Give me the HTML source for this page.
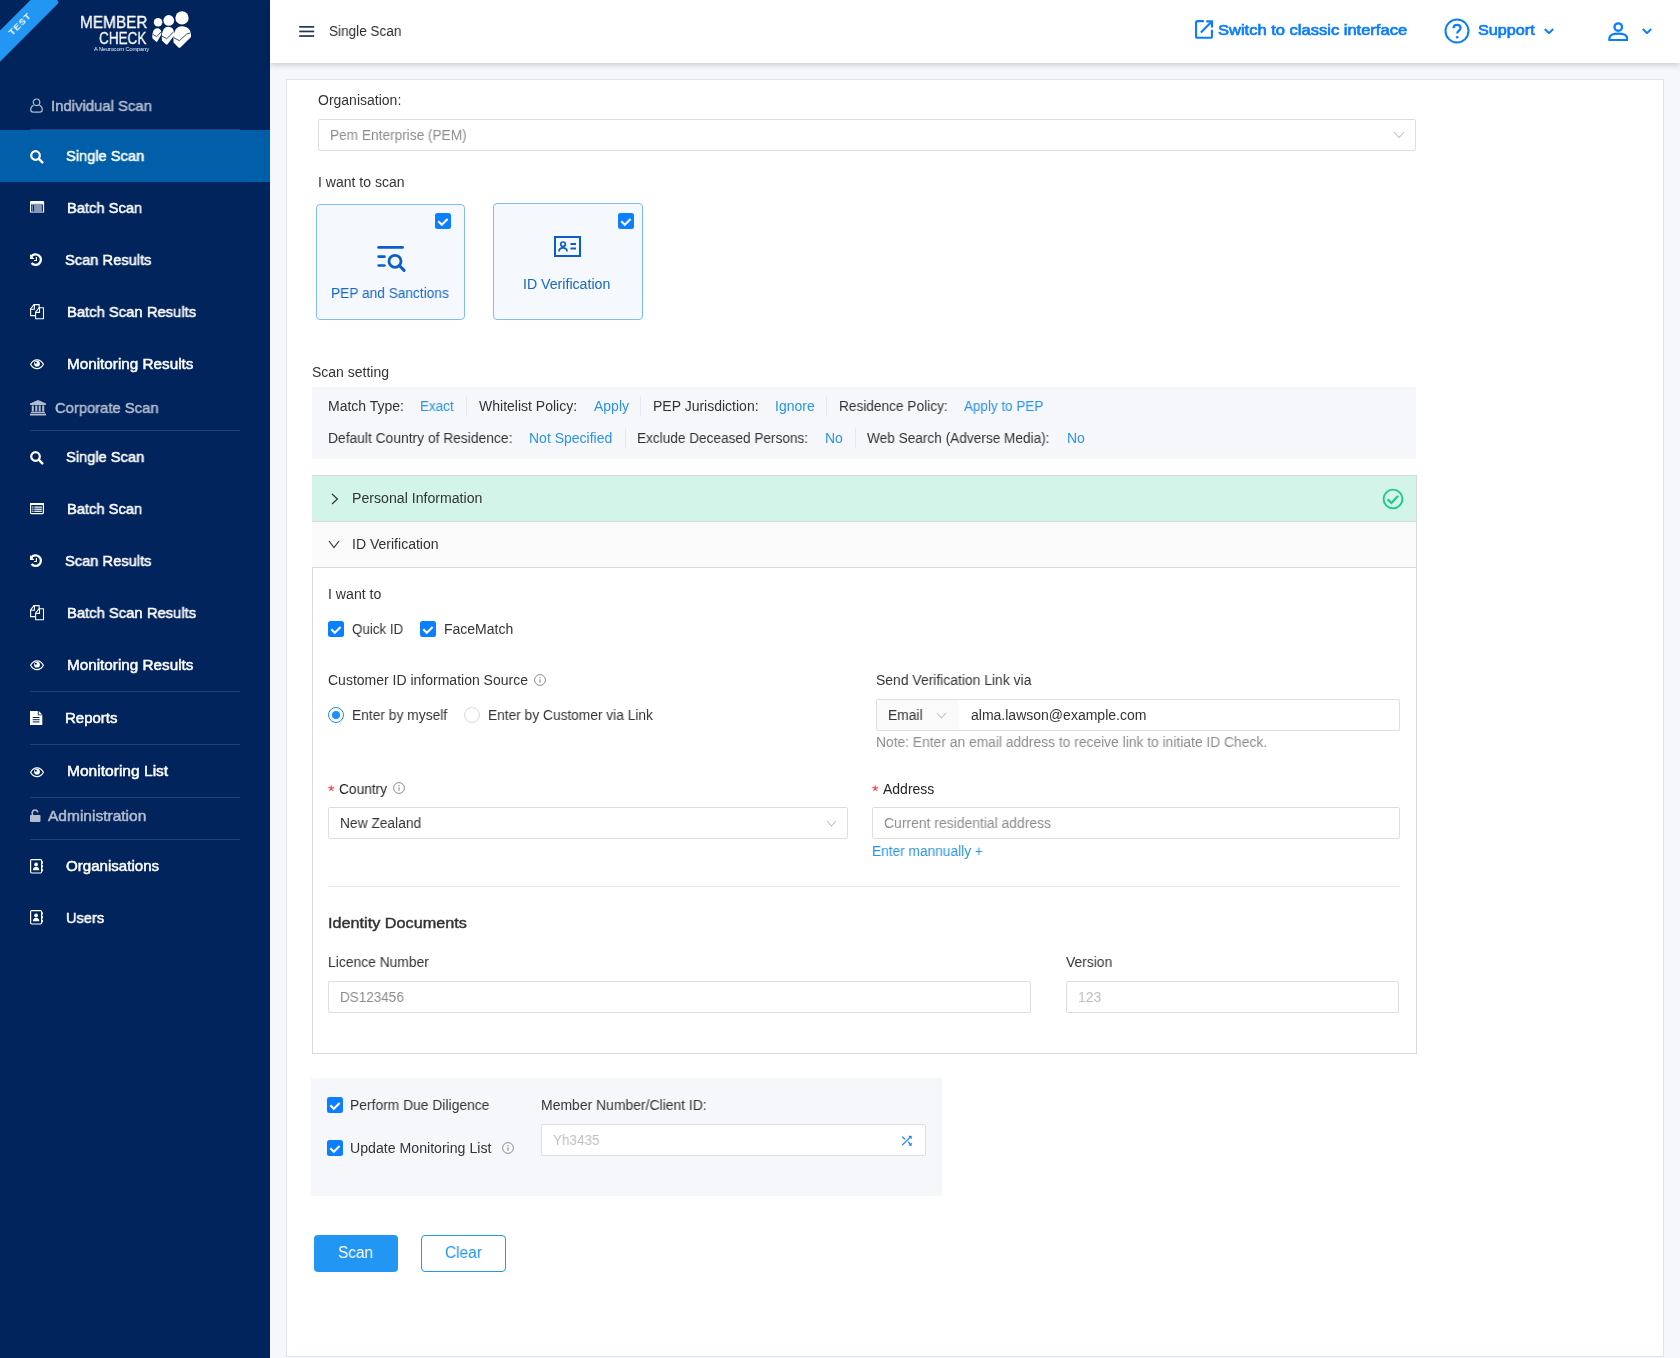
<!DOCTYPE html>
<html>
<head>
<meta charset="utf-8">
<title>Single Scan</title>
<style>
*{box-sizing:border-box;margin:0;padding:0}
html,body{width:1680px;height:1358px;overflow:hidden;background:#f5f7fb;font-family:"Liberation Sans",sans-serif;font-size:14px;color:#333}
.abs{position:absolute}
.t,.it,.hd,#lg1,#lg2,#lg3,#testtxt{will-change:transform}
.t{position:absolute;white-space:nowrap;line-height:20px;height:20px;font-size:14px;color:#333;transform-origin:0 50%}
.blue{color:#2a93e8}
.gray{color:#8c8c8c}
/* sidebar */
#side{position:absolute;left:0;top:0;width:270px;height:1358px;background:#00245b;overflow:hidden}
#side .it{position:absolute;white-space:nowrap;color:#fff;font-weight:normal;-webkit-text-stroke:.5px #fff;font-size:15px;line-height:20px;height:20px;transform-origin:0 50%}
#side .hd{position:absolute;white-space:nowrap;color:#b3bccf;font-weight:normal;-webkit-text-stroke:.5px #b3bccf;font-size:15px;line-height:20px;height:20px;transform-origin:0 50%}
#side .dv{position:absolute;left:30px;width:210px;height:1px;background:#22427a}
#side svg{position:absolute;overflow:visible}
/* header */
#hdr{position:absolute;left:270px;top:0;width:1410px;height:63px;background:#fff;box-shadow:0 2px 6px rgba(0,0,0,.18)}
#card{position:absolute;left:286px;top:79px;width:1378px;height:1277.500px;background:#fff;border:1px solid #dfe3ec}
.inp{position:absolute;background:#fff;border:1px solid #dedede;border-radius:2px}
.cb{position:absolute;width:16px;height:16px;background:#0c7fff;border-radius:2.500px}
.cb svg{position:absolute;left:0;top:0}
</style>
</head>
<body>
<div id="side">
<!-- TEST ribbon -->
<div class="abs" style="left:-34.500px;top:19px;width:100px;height:21.500px;background:#2196f3;transform:rotate(-45deg);transform-origin:50% 50%;border-radius:2.500px"></div>
<div class="abs" id="testtxt" style="left:0px;top:17px;width:40px;height:14px;line-height:14px;color:#fff;font-weight:bold;font-size:9.500px;letter-spacing:.9px;transform:rotate(-45deg);text-align:center;white-space:nowrap">TEST</div>
<!-- logo -->
<div id="logo" class="abs" style="left:79px;top:12px;width:115px;height:42px">
<div class="abs" id="lg1" style="left:.700px;top:2.200px;color:#fff;-webkit-text-stroke:.3px #fff;font-size:17px;line-height:18px;white-space:nowrap;transform-origin:0 50%;transform:scale(.905,1)">MEMBER</div>
<div class="abs" id="lg2" style="left:20.400px;top:16.700px;color:#fff;-webkit-text-stroke:.3px #fff;font-size:16.500px;line-height:18px;white-space:nowrap;transform-origin:0 50%;transform:scale(.82,1)">CHECK</div>
<div class="abs" id="lg3" style="left:15px;top:32.500px;color:#fff;font-size:6.200px;line-height:8px;white-space:nowrap;transform-origin:0 50%;transform:scale(.88,1)">A Neurocom Company</div>
<svg style="left:66px;top:-7px" width="55" height="50" viewBox="0 0 55 50">
<g fill="#fff">
<circle cx="13.070" cy="17.300" r="4.250"/><circle cx="23.750" cy="15.460" r="5.350"/><circle cx="37" cy="12.900" r="6.650"/>
<path d="M7.300 32.500C7.300 27 8.800 23.200 12 23.200c2.800 0 4.300 1.800 4.300 4.300v2L12.300 36.600q-.7.700-1.400 0L7.500 33.500z"/>
<path d="M16.800 32.500C16.800 26 19 21.700 23 21.700c4 0 6.100 2.800 6.100 6.300v2.500L22.600 39.200q-.9.800-1.800 0L17 35.500z"/>
<path d="M28.400 34C28.400 26 31.500 21.300 37 21.300c5.500 0 9 3.700 9 8.700v2L35.400 42.400q-1 .9-2 0L28.600 37.500z"/>
</g>
<g fill="none" stroke="#1b3a73" stroke-width=".9">
<path d="M8 29.300l3.600 2.400 4.600-4.900"/><path d="M16.900 31.100l4.800 2.600 7-6.900"/><path d="M28.600 32.700l5.800 3 7.200-6.600 4-1.300"/>
</g>
</svg>
</div>

<!-- Individual Scan header -->
<svg style="left:30px;top:98px" width="13" height="15" viewBox="0 0 13 15" fill="none" stroke="#b3bccf" stroke-width="1.200"><circle cx="6.500" cy="4.300" r="3.300"/><path d="M3.600 7.200C1.800 8 .7 9.500.7 11.500c0 1.500 1 2.600 2.500 2.600h6.600c1.500 0 2.500-1.100 2.500-2.600 0-2-1.100-3.500-2.900-4.300"/></svg>
<div class="hd" style="left:51px;top:96px;transform:scaleX(0.9928)">Individual Scan</div>
<div class="dv" style="top:129px"></div>
<div class="abs" style="left:0;top:130px;width:270px;height:52px;background:#005fa8"></div>

<div class="it" style="left:66px;top:146px;transform:scaleX(0.9780)">Single Scan</div>
<div class="it" style="left:67px;top:198px;transform:scaleX(0.9802)">Batch Scan</div>
<div class="it" style="left:65px;top:250px;transform:scaleX(0.9788)">Scan Results</div>
<div class="it" style="left:67px;top:302px;transform:scaleX(0.9862)">Batch Scan Results</div>
<div class="it" style="left:67px;top:354px;transform:scaleX(1.0184)">Monitoring Results</div>

<div class="hd" style="left:55px;top:398px;transform:scaleX(0.9861)">Corporate Scan</div>
<div class="dv" style="top:430px"></div>
<div class="it" style="left:66px;top:447px;transform:scaleX(0.9780)">Single Scan</div>
<div class="it" style="left:67px;top:499px;transform:scaleX(0.9802)">Batch Scan</div>
<div class="it" style="left:65px;top:551px;transform:scaleX(0.9788)">Scan Results</div>
<div class="it" style="left:67px;top:603px;transform:scaleX(0.9862)">Batch Scan Results</div>
<div class="it" style="left:67px;top:655px;transform:scaleX(1.0184)">Monitoring Results</div>
<div class="dv" style="top:691px"></div>
<div class="it" style="left:65px;top:708px;transform:scaleX(0.9918)">Reports</div>
<div class="dv" style="top:744px"></div>
<div class="it" style="left:67px;top:761px;transform:scaleX(1.0374)">Monitoring List</div>
<div class="dv" style="top:797px"></div>
<div class="hd" style="left:48px;top:806px;transform:scaleX(1.0342)">Administration</div>
<div class="dv" style="top:838.700px"></div>
<div class="it" style="left:66px;top:856px;transform:scaleX(1.0058)">Organisations</div>
<div class="it" style="left:66px;top:908px;transform:scaleX(0.9726)">Users</div>
<svg style="left:30px;top:150px" width="13" height="13" viewBox="0 0 13 13"><g fill="none" stroke="#fff"><circle cx="5.500" cy="5.500" r="4.300" stroke-width="2.200"/><path d="M8.900 8.900l3.400 3.400" stroke-width="2.500" stroke-linecap="round"/></g></svg>
<svg style="left:30px;top:201.100px" width="14.100" height="12.100" viewBox="0 0 14.100 12.100"><rect x="0" y="0" width="14.100" height="12.100" rx="1.300" fill="#8798b6"/><path d="M0 1.300Q0 0 1.300 0H12.800Q14.100 0 14.100 1.300V11.200H13.100V2.800H1V11.200H0z" fill="#fff"/><g fill="#00245b"><rect x="1.350" y="3.800" width=".8" height="6.600" rx=".4"/><rect x="3.100" y="3.800" width="1" height="6.600" rx=".5"/><rect x="11.900" y="3.800" width="1" height="6.600" rx=".5"/></g></svg>
<svg style="left:30px;top:253px" width="12.200" height="13.200" viewBox="0 0 12.200 13.200"><g fill="none" stroke="#fff"><path d="M1.260 3.560A5.300 5.300 0 1 1 1.540 10" stroke-width="2.300"/><path d="M0 1v4.900h4.300z" fill="#fff" stroke="none"/><path d="M6.400 4v3.500H4.100" stroke-width="1.200"/></g></svg>
<svg style="left:30px;top:304px" width="14" height="15.400" viewBox="0 0 14 15.400"><g fill="none" stroke="#fff" stroke-width="1.100" stroke-linejoin="round"><path d="M5.200 11.600H.6V4.800L3.900.6H9.200V4"/><path d="M4.400.6V5.200H.6"/><path d="M9.200 3.700H13.500V14.800H5.600V8z"/><path d="M9.500 3.700V8.400H5.600"/></g></svg>
<svg style="left:30px;top:358.800px" width="14" height="10.400" viewBox="0 0 14 10.400"><g><path d="M.6 5.200C2.200 2.200 4.500.8 7 .8s4.800 1.400 6.400 4.400C11.800 8.200 9.500 9.600 7 9.600S2.200 8.200.6 5.200z" fill="none" stroke="#fff" stroke-width="1.200"/><circle cx="7" cy="4.700" r="2.900" fill="#fff"/><circle cx="5.900" cy="3.700" r="1" fill="#00245b"/></g></svg>
<!-- bank -->
<svg style="left:30px;top:399.500px" width="16" height="15.500" viewBox="0 0 16 15.500" fill="#b3bccf"><path d="M8 0l8 3.600v1.300H0V3.600z"/><rect x="1.800" y="5.500" width="2" height="6"/><rect x="5.300" y="5.500" width="2" height="6"/><rect x="8.700" y="5.500" width="2" height="6"/><rect x="12.200" y="5.500" width="2" height="6"/><rect x="1" y="11.800" width="14" height="1.300"/><rect x="0" y="13.700" width="16" height="1.800"/></svg>
<svg style="left:30px;top:451.400px" width="13" height="13" viewBox="0 0 13 13"><g fill="none" stroke="#fff"><circle cx="5.500" cy="5.500" r="4.300" stroke-width="2.200"/><path d="M8.900 8.900l3.400 3.400" stroke-width="2.500" stroke-linecap="round"/></g></svg>
<svg style="left:30px;top:503px" width="14" height="11.200" viewBox="0 0 14 11.200"><g><rect x=".6" y=".6" width="12.800" height="10" rx=".8" fill="none" stroke="#fff" stroke-width="1.200"/><rect x="0" y="0" width="14" height="2" rx=".8" fill="#fff"/><g fill="#fff"><rect x="2.200" y="3.500" width="1.300" height="1.200"/><rect x="4.300" y="3.500" width="7.600" height="1.200"/><rect x="2.200" y="5.600" width="1.300" height="1.200"/><rect x="4.300" y="5.600" width="7.600" height="1.200"/><rect x="2.200" y="7.700" width="1.300" height="1.200"/><rect x="4.300" y="7.700" width="7.600" height="1.200"/></g></g></svg>
<svg style="left:30px;top:554.300px" width="12.200" height="13.200" viewBox="0 0 12.200 13.200"><g fill="none" stroke="#fff"><path d="M1.260 3.560A5.300 5.300 0 1 1 1.540 10" stroke-width="2.300"/><path d="M0 1v4.900h4.300z" fill="#fff" stroke="none"/><path d="M6.400 4v3.500H4.100" stroke-width="1.200"/></g></svg>
<svg style="left:30px;top:605.200px" width="14" height="15.400" viewBox="0 0 14 15.400"><g fill="none" stroke="#fff" stroke-width="1.100" stroke-linejoin="round"><path d="M5.200 11.600H.6V4.800L3.900.6H9.200V4"/><path d="M4.400.6V5.200H.6"/><path d="M9.200 3.700H13.500V14.800H5.600V8z"/><path d="M9.500 3.700V8.400H5.600"/></g></svg>
<svg style="left:30px;top:659.800px" width="14" height="10.400" viewBox="0 0 14 10.400"><g><path d="M.6 5.200C2.200 2.200 4.500.8 7 .8s4.800 1.400 6.400 4.400C11.800 8.200 9.500 9.600 7 9.600S2.200 8.200.6 5.200z" fill="none" stroke="#fff" stroke-width="1.200"/><circle cx="7" cy="4.700" r="2.900" fill="#fff"/><circle cx="5.900" cy="3.700" r="1" fill="#00245b"/></g></svg>
<!-- reports file -->
<svg style="left:30px;top:711px" width="12.500" height="14" viewBox="0 0 12.500 14"><path d="M0 0h7.800v4.200h4.500V14H0z" fill="#fff"/><path d="M8.700 0l3.600 3.400H8.700z" fill="#fff"/><g fill="#00245b"><rect x="2.700" y="6" width="6.800" height="1"/><rect x="2.700" y="8.200" width="6.800" height="1"/><rect x="2.700" y="10.400" width="6.800" height="1"/></g></svg>
<svg style="left:30px;top:766.800px" width="14" height="10.400" viewBox="0 0 14 10.400"><g><path d="M.6 5.200C2.200 2.200 4.500.8 7 .8s4.800 1.400 6.400 4.400C11.800 8.200 9.500 9.600 7 9.600S2.200 8.200.6 5.200z" fill="none" stroke="#fff" stroke-width="1.200"/><circle cx="7" cy="4.700" r="2.900" fill="#fff"/><circle cx="5.900" cy="3.700" r="1" fill="#00245b"/></g></svg>
<!-- unlock -->
<svg style="left:30px;top:808.800px" width="10.500" height="13" viewBox="0 0 10.500 13"><rect x="0" y="6" width="10.500" height="7" rx="1" fill="#b3bccf"/><path d="M2.300 6V3.800c0-1.700 1.200-2.800 2.700-2.800 1.400 0 2.500.9 2.700 2.300" fill="none" stroke="#b3bccf" stroke-width="1.600"/></svg>
<svg style="left:30px;top:858.500px" width="13" height="14.600" viewBox="0 0 13 14.600"><g><rect x=".6" y=".6" width="11" height="13.400" rx="1.200" fill="none" stroke="#fff" stroke-width="1.200"/><rect x="12" y="2.300" width="1" height="2.400" fill="#fff"/><rect x="12" y="6.100" width="1" height="2.400" fill="#fff"/><rect x="12" y="9.900" width="1" height="2.400" fill="#fff"/><circle cx="6.100" cy="5.400" r="1.900" fill="#fff"/><path d="M2.900 11.300c0-2.300 1.300-3.600 3.200-3.600s3.200 1.300 3.200 3.600z" fill="#fff"/></g></svg>
<svg style="left:30px;top:910.300px" width="13" height="14.600" viewBox="0 0 13 14.600"><g><rect x=".6" y=".6" width="11" height="13.400" rx="1.200" fill="none" stroke="#fff" stroke-width="1.200"/><rect x="12" y="2.300" width="1" height="2.400" fill="#fff"/><rect x="12" y="6.100" width="1" height="2.400" fill="#fff"/><rect x="12" y="9.900" width="1" height="2.400" fill="#fff"/><circle cx="6.100" cy="5.400" r="1.900" fill="#fff"/><path d="M2.900 11.300c0-2.300 1.300-3.600 3.200-3.600s3.200 1.300 3.200 3.600z" fill="#fff"/></g></svg>
</div>
<div id="hdr">
<!-- coordinates relative to #hdr (left 270) -->
<svg class="abs" style="left:29.300px;top:25.700px" width="15.400" height="11" viewBox="0 0 15 11"><g fill="#1d3557"><rect x="0" y="0" width="15" height="1.700"/><rect x="0" y="4.600" width="15" height="1.700"/><rect x="0" y="9.200" width="15" height="1.700"/></g></svg>
<div class="t" style="left:59px;top:21px;color:#2b2b2b;transform:scaleX(0.9676)">Single Scan</div>

<svg class="abs" style="left:925px;top:20px" width="18" height="19" viewBox="0 0 18 19" fill="none" stroke="#0a7dff" stroke-width="2.100"><path d="M8.900 1.150H2.600Q1.050 1.150 1.050 2.700V16.200Q1.050 17.750 2.600 17.750H15.400Q16.950 17.750 16.950 16.200V9.700"/><path d="M11.200 1.350H16.950V7.600"/><path d="M16.300 2.100L5.900 12.600"/></svg>
<div class="t" style="left:948px;top:20px;font-size:15.500px;color:#0a7dff;-webkit-text-stroke:.7px #0a7dff;transform:scaleX(1.0655)">Switch to classic interface</div>

<svg class="abs" style="left:1174px;top:18px" width="26" height="26" viewBox="0 0 26 26" fill="none" stroke="#0a7dff" stroke-width="2"><circle cx="13" cy="13" r="11.500"/><path d="M9.500 10.200c0-2 1.500-3.400 3.500-3.400s3.500 1.300 3.500 3.200c0 2.500-3.300 2.700-3.300 5.500" stroke-width="2.200"/><circle cx="13.200" cy="19.200" r="1.300" fill="#0a7dff" stroke="none"/></svg>
<div class="t" style="left:1208px;top:20px;font-size:15.500px;color:#0a7dff;-webkit-text-stroke:.7px #0a7dff;transform:scaleX(1.0443)">Support</div>
<svg class="abs" style="left:1274.300px;top:27.600px" width="10" height="6.700" viewBox="0 0 12 8" fill="none" stroke="#0a7dff" stroke-width="2.300"><path d="M1 1.200l5 5 5-5"/></svg>

<svg class="abs" style="left:1337.600px;top:20.800px" width="20.500" height="20.500" viewBox="0 0 22 22" fill="none" stroke="#0a7dff" stroke-width="2.500"><circle cx="11" cy="6.500" r="4"/><path d="M1.500 20.500v-2c0-3 4-5 9.500-5s9.500 2 9.500 5v2z" stroke-linejoin="round"/></svg>
<svg class="abs" style="left:1372px;top:27.600px" width="10" height="6.700" viewBox="0 0 12 8" fill="none" stroke="#0a7dff" stroke-width="2.300"><path d="M1 1.200l5 5 5-5"/></svg>
</div>
<div id="card"></div>
<div id="main" class="abs" style="left:0;top:0">
<div class="t" style="left:318px;top:90px;transform:scaleX(0.9942)">Organisation:</div>
<div class="inp" style="left:318px;top:119px;width:1098px;height:32px"></div>
<div class="t gray" style="left:330px;top:125.200px;transform:scaleX(0.9761)">Pem Enterprise (PEM)</div>
<svg class="abs" style="left:1393px;top:130.500px" width="12" height="8" viewBox="0 0 12 8" fill="none" stroke="#bfbfbf" stroke-width="1.100"><path d="M1 1l5 5.500 5-5.500"/></svg>

<div class="t" style="left:318px;top:172px;transform:scaleX(1.0024)">I want to scan</div>
<!-- scan type cards -->
<div class="abs" style="left:315.500px;top:204px;width:149.500px;height:116px;background:#f5f8fd;border:1px solid #7fbcf7;border-radius:4px"></div>
<div class="cb" style="left:435.300px;top:213px"><svg width="16" height="16" viewBox="0 0 16 16" fill="none" stroke="#fff" stroke-width="2"><path d="M3.300 8.300l3.500 3.500 5.800-5.800"/></svg></div>
<svg class="abs" style="left:376px;top:244.800px" width="32" height="30" viewBox="0 0 32 30" fill="none" stroke="#0a5ec8" stroke-width="2.700" stroke-linecap="round"><path d="M2.600 2.400h24"/><path d="M2.700 11.700h5.700"/><path d="M2.700 20.500h5.700"/><circle cx="19" cy="16.300" r="6" stroke-width="2.800"/><path d="M23.500 20.800l4.600 4.600" stroke-width="3"/></svg>
<div class="t" style="left:331px;top:283px;color:#1767c2;transform:scaleX(0.9785)" id="pep">PEP and Sanctions</div>

<div class="abs" style="left:493px;top:203px;width:149.500px;height:117px;background:#f5f8fd;border:1px solid #7fbcf7;border-radius:4px"></div>
<div class="cb" style="left:617.600px;top:213px"><svg width="16" height="16" viewBox="0 0 16 16" fill="none" stroke="#fff" stroke-width="2"><path d="M3.300 8.300l3.500 3.500 5.800-5.800"/></svg></div>
<svg class="abs" style="left:554px;top:236px" width="27" height="21" viewBox="0 0 27 21" fill="none" stroke="#0a5ec8" stroke-width="2"><rect x="1" y="1" width="25" height="19"/><circle cx="9" cy="8.300" r="2.300" stroke-width="1.700"/><path d="M5 15.500c0-2.500 1.800-3.700 4-3.700s4 1.200 4 3.700" stroke-width="1.700"/><path d="M16.500 8h5.500M16.500 12.500h5.500" stroke-width="1.800"/></svg>
<div class="t" style="left:523px;top:274px;color:#1767c2;transform:scaleX(1.0107)" id="idv">ID Verification</div>

<div class="t" style="left:312px;top:362px;transform:scaleX(0.9992)">Scan setting</div>
<div class="abs" style="left:312px;top:387px;width:1104px;height:72px;background:#f5f7fb"></div>
<!-- row1 -->
<div class="t" style="left:328px;top:396.400px;transform:scaleX(0.9972)">Match Type:</div>
<div class="t blue" style="left:420px;top:396.400px;transform:scaleX(0.9653)">Exact</div>
<div class="abs" style="left:466px;top:396.400px;width:1px;height:20px;background:#e4e7ee"></div>
<div class="t" style="left:479px;top:396.400px;transform:scaleX(1.0007)">Whitelist Policy:</div>
<div class="t blue" style="left:594px;top:396.400px;transform:scaleX(0.9877)">Apply</div>
<div class="abs" style="left:640px;top:396.400px;width:1px;height:20px;background:#e4e7ee"></div>
<div class="t" style="left:653px;top:396.400px;transform:scaleX(1.0002)">PEP Jurisdiction:</div>
<div class="t blue" style="left:775px;top:396.400px;transform:scaleX(0.9898)">Ignore</div>
<div class="abs" style="left:826px;top:396.400px;width:1px;height:20px;background:#e4e7ee"></div>
<div class="t" style="left:839px;top:396.400px;transform:scaleX(0.9759)">Residence Policy:</div>
<div class="t blue" style="left:964px;top:396.400px;transform:scaleX(0.9612)">Apply to PEP</div>
<!-- row2 -->
<div class="t" style="left:328px;top:428.300px;transform:scaleX(0.9873)">Default Country of Residence:</div>
<div class="t blue" style="left:529px;top:428.300px;transform:scaleX(0.9954)">Not Specified</div>
<div class="abs" style="left:625px;top:428.300px;width:1px;height:20px;background:#e4e7ee"></div>
<div class="t" style="left:637px;top:428.300px;transform:scaleX(0.9723)">Exclude Deceased Persons:</div>
<div class="t blue" style="left:825px;top:428.300px;transform:scaleX(0.9997)">No</div>
<div class="abs" style="left:855px;top:428.300px;width:1px;height:20px;background:#e4e7ee"></div>
<div class="t" style="left:867px;top:428.300px;transform:scaleX(0.9746)">Web Search (Adverse Media):</div>
<div class="t blue" style="left:1067px;top:428.300px;transform:scaleX(0.9941)">No</div>

<!-- collapse -->
<div class="abs" style="left:311.500px;top:474.700px;width:1105px;height:579px;border:1px solid #d9d9d9;background:#fff"></div>
<div class="abs" style="left:312px;top:476px;width:1104px;height:45px;background:#d3f4e8"></div>
<div class="abs" style="left:312px;top:521px;width:1104px;height:1px;background:#d9d9d9"></div>
<div class="abs" style="left:312px;top:522px;width:1104px;height:45px;background:#fafafa"></div>
<div class="abs" style="left:312px;top:567px;width:1104px;height:1px;background:#d9d9d9"></div>
<svg class="abs" style="left:330.500px;top:492.500px" width="8" height="12" viewBox="0 0 8 12" fill="none" stroke="#333" stroke-width="1.200"><path d="M1 1l5.500 5-5.500 5"/></svg>
<div class="t" style="left:352px;top:488px;transform:scaleX(1.0094)">Personal Information</div>
<svg class="abs" style="left:1382px;top:488px" width="22" height="22" viewBox="0 0 22 22" fill="none" stroke="#20c78a" stroke-width="1.900"><circle cx="11" cy="11" r="9.400"/><path d="M5.700 11.400l3.700 3.600 6.700-7" stroke-width="2.200"/></svg>
<svg class="abs" style="left:328.200px;top:540px" width="12" height="9" viewBox="0 0 12 9" fill="none" stroke="#333" stroke-width="1.200"><path d="M1 1l5 6.500 5-6.500"/></svg>
<div class="t" style="left:352px;top:534.400px;transform:scaleX(1.0026)">ID Verification</div>
<div class="t" style="left:328px;top:584.400px;transform:scaleX(1.0090)">I want to</div>
<div class="cb" style="left:328px;top:621.100px"><svg width="16" height="16" viewBox="0 0 16 16" fill="none" stroke="#fff" stroke-width="2"><path d="M3.300 8.300l3.500 3.500 5.800-5.800"/></svg></div>
<div class="t" style="left:352px;top:619.100px;transform:scaleX(0.9537)">Quick ID</div>
<div class="cb" style="left:420px;top:621.100px"><svg width="16" height="16" viewBox="0 0 16 16" fill="none" stroke="#fff" stroke-width="2"><path d="M3.300 8.300l3.500 3.500 5.800-5.800"/></svg></div>
<div class="t" style="left:444px;top:619.100px;transform:scaleX(0.9949)">FaceMatch</div>

<div class="t" style="left:328px;top:670px;transform:scaleX(0.9977)">Customer ID information Source</div>
<svg class="abs info" style="left:534.300px;top:674.400px" width="12" height="12" viewBox="0 0 12 12" fill="none" stroke="#8c8c8c" stroke-width="1"><circle cx="6" cy="6" r="5.400"/><path d="M6 5.200v3.600M6 3.100v1.100" stroke-width="1.100"/></svg>
<!-- radios -->
<div class="abs" style="left:328px;top:707px;width:16px;height:16px;border:1px solid #1a8cff;border-radius:50%;background:#fff"></div>
<div class="abs" style="left:332px;top:711px;width:8px;height:8px;border-radius:50%;background:#1890ff"></div>
<div class="t" style="left:352px;top:705.200px;transform:scaleX(0.9857)">Enter by myself</div>
<div class="abs" style="left:464px;top:707px;width:16px;height:16px;border:1px solid #d9d9d9;border-radius:50%;background:#fff"></div>
<div class="t" style="left:488px;top:705.200px;transform:scaleX(0.9811)">Enter by Customer via Link</div>

<div class="t" style="left:876px;top:670px;transform:scaleX(0.9934)">Send Verification Link via</div>
<div class="inp" style="left:876px;top:699.300px;width:524px;height:32px"></div>
<div class="abs" style="left:877px;top:700.300px;width:81.500px;height:30px;background:#fafafa"></div>
<div class="t" style="left:888px;top:705.200px;transform:scaleX(0.9853)">Email</div>
<svg class="abs" style="left:936px;top:711.500px" width="11" height="8" viewBox="0 0 11 8" fill="none" stroke="#bfbfbf" stroke-width="1.100"><path d="M1 1l4.500 5 4.500-5"/></svg>
<div class="t" style="left:971px;top:705.200px;transform:scaleX(1.0007)">alma.lawson@example.com</div>
<div class="t gray" style="left:876px;top:732.300px;transform:scaleX(0.9874)">Note: Enter an email address to receive link to initiate ID Check.</div>

<svg class="abs" style="left:328.3px;top:785.2px" width="6.400" height="6.400" viewBox="0 0 6.400 6.400" fill="none" stroke="#f5475c" stroke-width="1.150"><path d="M3.2 3.3L3.20 0.30M3.2 3.3L6.05 2.37M3.2 3.3L4.96 5.73M3.2 3.3L1.44 5.73M3.2 3.3L0.35 2.37"/></svg>
<div class="t" style="left:339px;top:779px;color:#222;transform:scaleX(0.9810)">Country</div>
<svg class="abs info" style="left:393.200px;top:782.200px" width="12" height="12" viewBox="0 0 12 12" fill="none" stroke="#8c8c8c" stroke-width="1"><circle cx="6" cy="6" r="5.400"/><path d="M6 5.200v3.600M6 3.100v1.100" stroke-width="1.100"/></svg>
<div class="inp" style="left:328px;top:807.100px;width:520px;height:32px"></div>
<div class="t" style="left:340px;top:813.300px;transform:scaleX(0.9830)">New Zealand</div>
<svg class="abs" style="left:825.500px;top:819.500px" width="11" height="8" viewBox="0 0 11 8" fill="none" stroke="#bfbfbf" stroke-width="1.100"><path d="M1 1l4.500 5 4.500-5"/></svg>

<svg class="abs" style="left:872.4px;top:785.2px" width="6.400" height="6.400" viewBox="0 0 6.400 6.400" fill="none" stroke="#f5475c" stroke-width="1.150"><path d="M3.2 3.3L3.20 0.30M3.2 3.3L6.05 2.37M3.2 3.3L4.96 5.73M3.2 3.3L1.44 5.73M3.2 3.3L0.35 2.37"/></svg>
<div class="t" style="left:883px;top:779px;color:#222;transform:scaleX(0.9911)">Address</div>
<div class="inp" style="left:872px;top:807.100px;width:528px;height:32px"></div>
<div class="t gray" style="left:884px;top:813.100px;transform:scaleX(0.9941)">Current residential address</div>
<div class="t blue" style="left:872px;top:841.300px;transform:scaleX(0.9794)">Enter mannually +</div>

<div class="abs" style="left:328px;top:886px;width:1072px;height:1px;background:#e4e5f0"></div>
<div class="t" style="left:328px;top:913px;font-size:15.500px;color:#333;-webkit-text-stroke:.45px #333;transform:scaleX(1.0468)">Identity Documents</div>
<div class="t" style="left:328px;top:952.400px;transform:scaleX(0.9898)">Licence Number</div>
<div class="inp" style="left:328px;top:981.300px;width:703px;height:31.500px"></div>
<div class="t gray" style="left:340px;top:987.300px;transform:scaleX(0.9642)">DS123456</div>
<div class="t" style="left:1066px;top:952.400px;transform:scaleX(0.9892)">Version</div>
<div class="inp" style="left:1066px;top:981.300px;width:333px;height:31.500px"></div>
<div class="t" style="left:1078px;top:987.300px;color:#bfbfbf;transform:scaleX(1.0017)">123</div>

<!-- bottom gray box -->
<div class="abs" style="left:310.500px;top:1078px;width:631.500px;height:118px;background:#f5f7fb"></div>
<div class="cb" style="left:326.500px;top:1097.300px"><svg width="16" height="16" viewBox="0 0 16 16" fill="none" stroke="#fff" stroke-width="2"><path d="M3.300 8.300l3.500 3.500 5.800-5.800"/></svg></div>
<div class="t" style="left:350px;top:1095.300px;transform:scaleX(0.9897)">Perform Due Diligence</div>
<div class="cb" style="left:326.500px;top:1140.200px"><svg width="16" height="16" viewBox="0 0 16 16" fill="none" stroke="#fff" stroke-width="2"><path d="M3.300 8.300l3.500 3.500 5.800-5.800"/></svg></div>
<div class="t" style="left:350px;top:1138px;transform:scaleX(1.0094)">Update Monitoring List</div>
<svg class="abs info" style="left:501.600px;top:1142.300px" width="12" height="12" viewBox="0 0 12 12" fill="none" stroke="#8c8c8c" stroke-width="1"><circle cx="6" cy="6" r="5.400"/><path d="M6 5.200v3.600M6 3.100v1.100" stroke-width="1.100"/></svg>
<div class="t" style="left:541px;top:1095.300px;transform:scaleX(0.9958)">Member Number/Client ID:</div>
<div class="inp" style="left:541px;top:1124.300px;width:384.500px;height:32px"></div>
<div class="t" style="left:553px;top:1130.200px;color:#bfbfbf;transform:scaleX(0.9631)">Yh3435</div>
<svg class="abs" style="left:901px;top:1134.500px" width="11" height="11" viewBox="0 0 11 11" fill="none" stroke="#0a7dff" stroke-width="1.150"><path d="M1.200 10.200L9.400 2.100M1.200 1.700l3 2.700M7.200 7l1.900 1.900"/><path d="M7.700 1.100h2.700v2.700zM10.400 7.800v2.700H7.700z" fill="#0a7dff" stroke-width=".4"/></svg>

<!-- buttons -->
<div class="abs" style="left:314px;top:1235.300px;width:84px;height:37px;background:#2196f3;border-radius:4px"></div>
<div class="t" style="left:338px;top:1243px;color:#fff;font-size:16px;transform:scaleX(0.9597)">Scan</div>
<div class="abs" style="left:421px;top:1235.300px;width:85px;height:37px;background:#fff;border:1px solid #2196f3;border-radius:4px"></div>
<div class="t" style="left:445px;top:1243px;color:#2196f3;font-size:16px;transform:scaleX(0.9651)">Clear</div>
</div>
</body>
</html>
